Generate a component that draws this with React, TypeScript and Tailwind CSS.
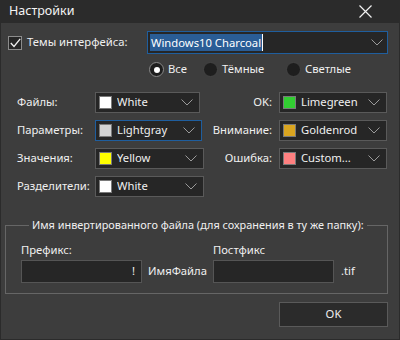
import React from "react";

const FONT = { fontFamily: '"Noto Sans", "Open Sans", sans-serif' };

function Chevron() {
  return (
    <svg width="12" height="7" viewBox="0 0 12 7" className="shrink-0">
      <polyline points="0.5,0.5 6,6 11.5,0.5" fill="none" stroke="#9a9a9a" strokeWidth="1" />
    </svg>
  );
}

interface ColorComboProps {
  color: string;
  label: string;
  width: string;
  focused?: boolean;
}

function ColorCombo({ color, label, width, focused }: ColorComboProps) {
  return (
    <div
      className={`flex h-[21px] items-center border bg-[#262626] pl-[3px] pr-[6px] ${width} ${
        focused ? "border-[#1f5e9e]" : "border-[#5a5a5a]"
      }`}
    >
      <span className="h-[13px] w-[13px] shrink-0 border border-[#7a7a7a]" style={{ backgroundColor: color }} />
      <span className="ml-[5px] flex-1 truncate text-[11.25px] text-[#f0f0f0]">{label}</span>
      <Chevron />
    </div>
  );
}

function Radio({ checked, label, width }: { checked?: boolean; label: string; width: string }) {
  return (
    <div className={`flex items-center gap-[4px] ${width}`}>
      <span
        className={`flex h-[15px] w-[15px] shrink-0 items-center justify-center rounded-full border bg-[#1e1e1e] ${
          checked ? "border-[#8a8a8a]" : "border-[#444]"
        }`}
      >
        {checked && <span className="h-[6px] w-[6px] rounded-full bg-white" />}
      </span>
      <span className="text-[11.25px] text-[#f0f0f0]">{label}</span>
    </div>
  );
}

export default function App() {
  const left = [
    { label: "Файлы:", color: "#ffffff", name: "White", width: "w-[105px]" },
    { label: "Параметры:", color: "#d3d3d3", name: "Lightgray", width: "w-[107px]", focused: true },
    { label: "Значения:", color: "#ffff00", name: "Yellow", width: "w-[109px]" },
    { label: "Разделители:", color: "#ffffff", name: "White", width: "w-[109px]" },
  ];
  const right = [
    { label: "OK:", color: "#32cd32", name: "Limegreen" },
    { label: "Внимание:", color: "#daa520", name: "Goldenrod" },
    { label: "Ошибка:", color: "#ff8080", name: "Custom..." },
  ];

  return (
    <div style={FONT} className="flex h-[340px] w-[400px] flex-col border border-t-0 border-[#2b2b2b] bg-[#3d3d3d] text-[#f0f0f0]">
      <div className="flex h-[23px] shrink-0 items-center justify-between bg-[#2b2b2b] pl-[8px] pr-[27px]">
        <span className="text-[12.5px] text-[#f4f4f4]">Настройки</span>
        <svg width="13" height="13" viewBox="0 0 13 13">
          <path d="M0.5 0.5 L12.5 12.5 M12.5 0.5 L0.5 12.5" stroke="#f0f0f0" strokeWidth="1.2" />
        </svg>
      </div>

      <div className="flex flex-col px-[7px] pt-[8px]">
        <div className="flex h-[23px] items-center">
          <span className="flex h-[14px] w-[14px] items-center justify-center border border-[#8c8c8c] bg-[#262626]">
            <svg width="11" height="10" viewBox="0 0 11 10">
              <polyline points="0.8,5 4,8.5 10.2,0.8" fill="none" stroke="#f0f0f0" strokeWidth="1.3" />
            </svg>
          </span>
          <span className="ml-[5px] w-[120px] text-[11.25px]">Темы интерфейса:</span>
          <div className="flex h-[23px] w-[241px] items-center border border-[#1f5e9e] bg-[#262626] pl-[2px] pr-[2px]">
            <span className="bg-[#2a5d96] px-[1px] text-[11.25px] leading-[17px] text-white">Windows10 Charcoal</span>
            <span className="h-[17px] w-px bg-white" />
            <span className="flex-1" />
            <span className="pr-[2px]">
              <Chevron />
            </span>
          </div>
        </div>

        <div className="ml-[141px] mt-[8px] flex h-[15px] items-center">
          <Radio checked label="Все" width="w-[54px]" />
          <Radio label="Тёмные" width="w-[83px]" />
          <Radio label="Светлые" width="w-[90px]" />
        </div>

        <div className="mt-[15px] flex">
          <div className="flex flex-col gap-[7px]">
            {left.map((r) => (
              <div key={r.label + r.name} className="flex items-center">
                <span className="w-[87px] pl-[9px] text-[11.25px]">{r.label}</span>
                <ColorCombo color={r.color} label={r.name} width={r.width} focused={r.focused} />
              </div>
            ))}
          </div>
          <div className="ml-auto mr-[5px] flex flex-col gap-[7px]">
            {right.map((r) => (
              <div key={r.label} className="flex items-center justify-end">
                <span className="mr-[7px] text-[11.25px]">{r.label}</span>
                <ColorCombo color={r.color} label={r.name} width="w-[108px]" />
              </div>
            ))}
          </div>
        </div>

        <fieldset className="mt-[20px] mr-[4px] ml-[-3px] h-[77px] border border-[#666] px-[15px] pb-0">
          <legend className="ml-[8px] whitespace-nowrap px-[3px] text-[10.9px] leading-[16px]">
            Имя инвертированного файла (для сохранения в ту же папку):
          </legend>
          <div className="mt-[9px] flex items-end">
            <div className="flex flex-col">
              <span className="text-[11.25px] leading-[16px]">Префикс:</span>
              <div className="mt-[2px] flex h-[23px] w-[121px] items-center justify-end border border-[#555] bg-[#262626] pr-[6px] text-[11.25px]">
                !
              </div>
            </div>
            <span className="mx-[6px] mb-[3px] text-[11.25px]">ИмяФайла</span>
            <div className="flex flex-col">
              <span className="text-[11.25px] leading-[16px]">Постфикс</span>
              <div className="mt-[2px] h-[23px] w-[121px] border border-[#555] bg-[#262626]" />
            </div>
            <span className="ml-[7px] mb-[3px] text-[11.25px]">.tif</span>
          </div>
        </fieldset>

        <div className="mt-[8px] flex justify-end pr-[4px]">
          <button className="h-[25px] w-[109px] border border-[#5a5a5a] bg-[#2b2b2b] text-[11.25px] text-[#f0f0f0]">
            OK
          </button>
        </div>
      </div>
    </div>
  );
}
